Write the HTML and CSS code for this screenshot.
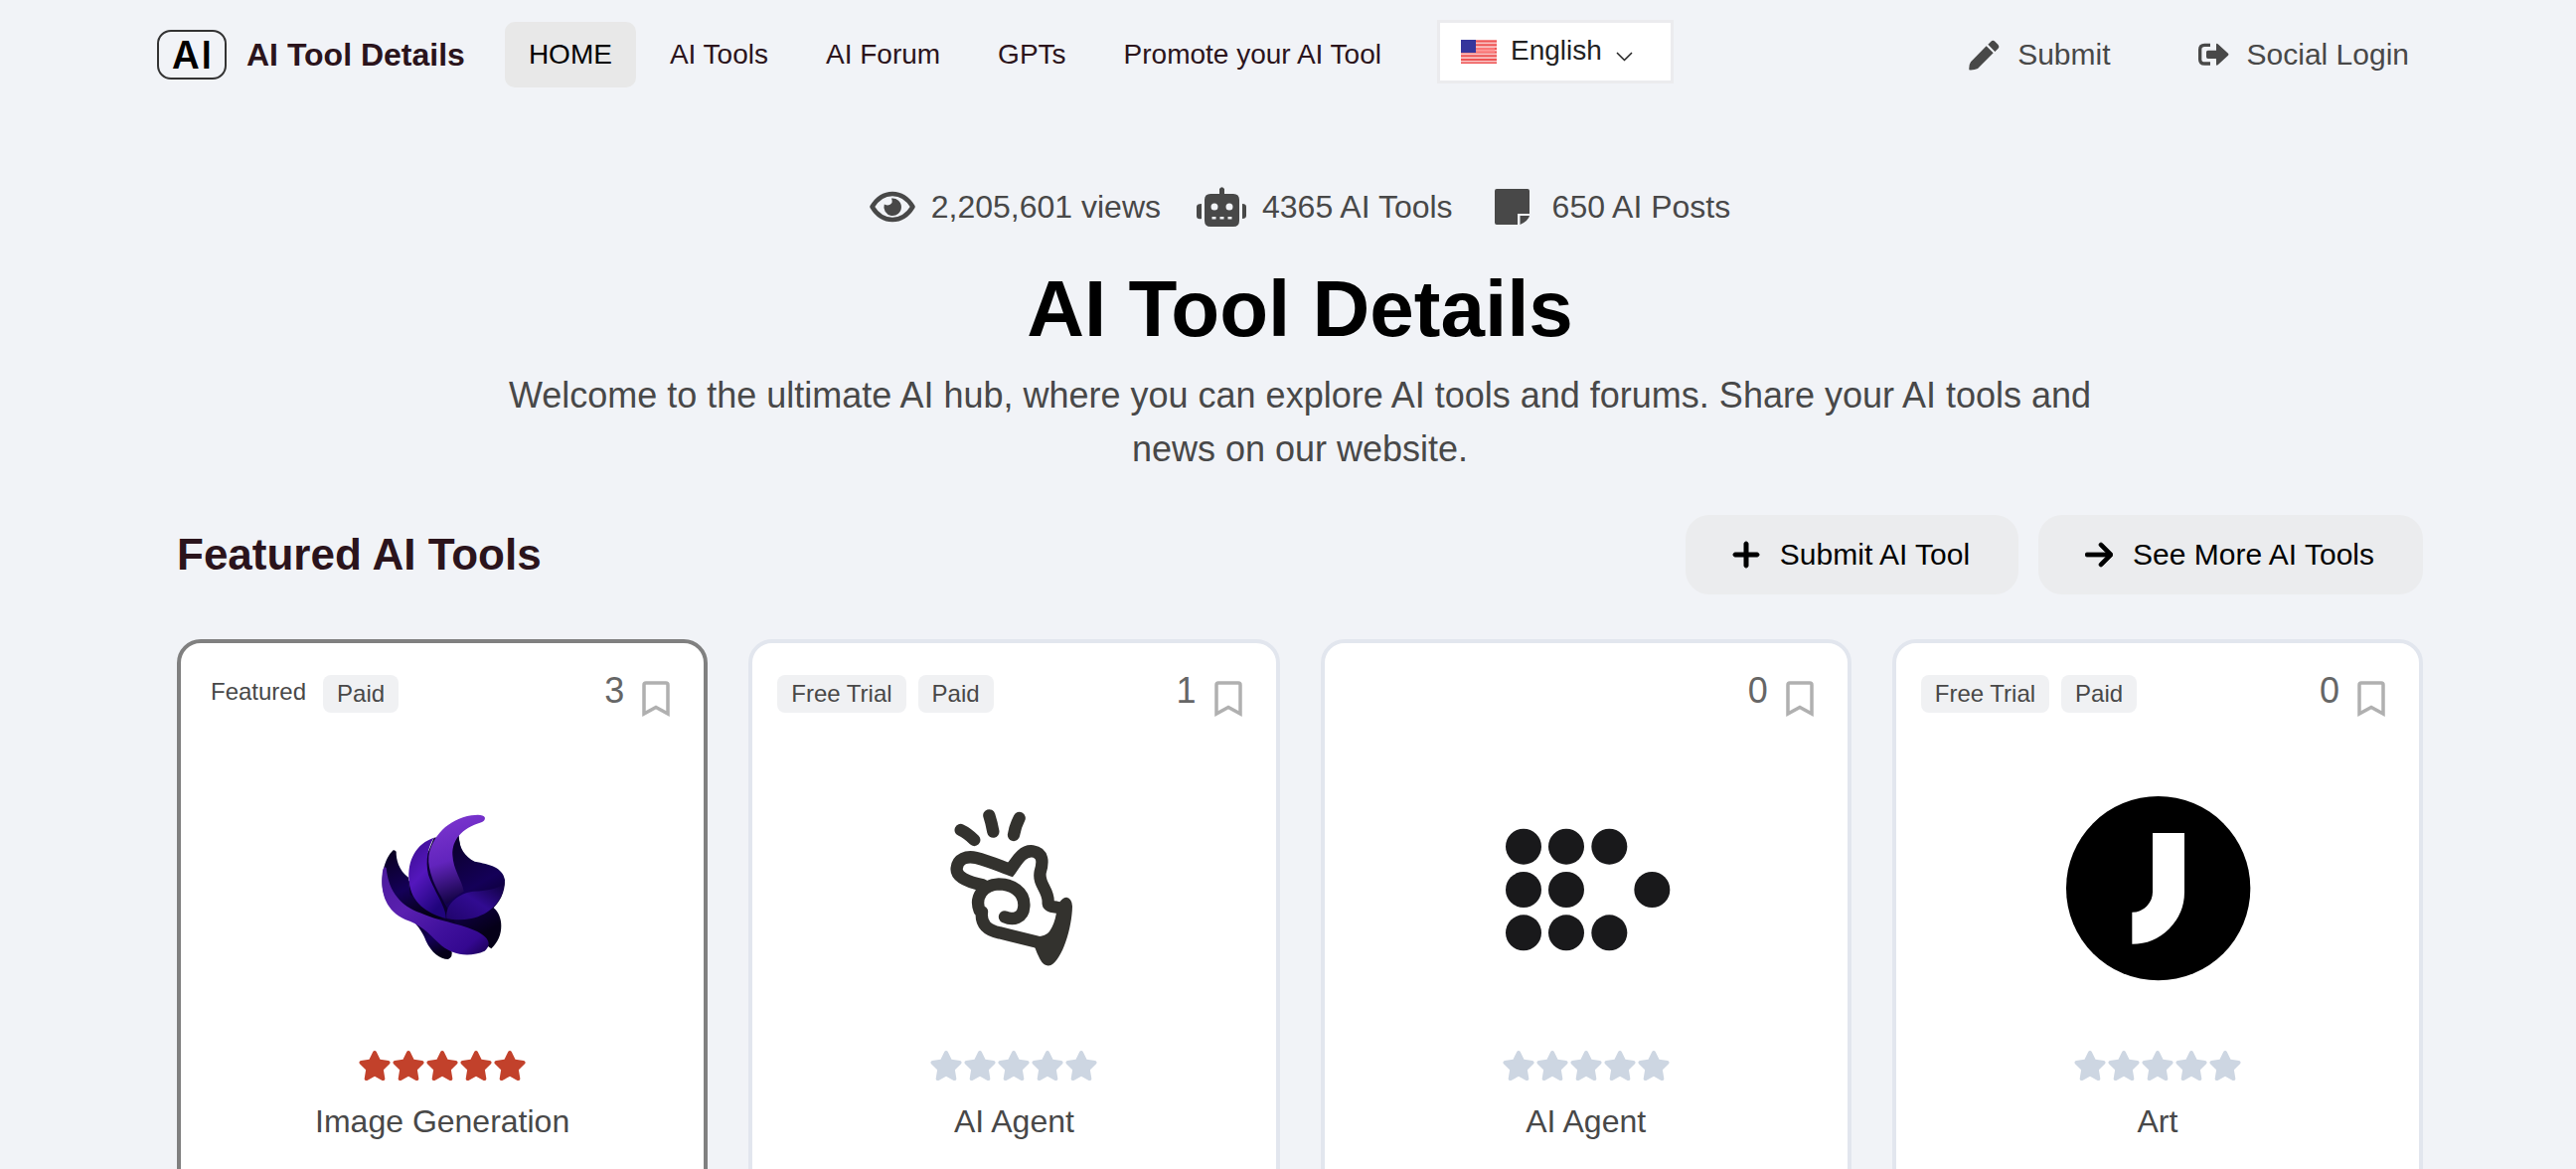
FILE: index.html
```html
<!DOCTYPE html>
<html lang="en">
<head>
<meta charset="utf-8">
<meta name="viewport" content="width=device-width, initial-scale=1">
<title>AI Tool Details</title>
<link rel="stylesheet" href="styles.css">
</head>
<body>
<svg class="sprite" aria-hidden="true">
  <symbol id="star" viewBox="0 0 576 512"><path d="M316.9 18C311.6 7 300.4 0 288.1 0s-23.4 7-28.8 18L195 150.3 51.4 171.5c-12 1.8-22 10.2-25.7 21.7s-.7 24.2 7.9 32.7L137.8 329 113.2 474.7c-2 12 3 24.2 12.9 31.3s23 8 33.8 2.3l128.3-68.5 128.3 68.5c10.8 5.7 23.9 4.9 33.8-2.3s14.9-19.3 12.9-31.3L438.5 329 542.7 225.9c8.6-8.5 11.7-21.2 7.9-32.7s-13.7-19.9-25.7-21.7L381.2 150.3 316.9 18z"/></symbol>
  <symbol id="bookmark" viewBox="0 0 28 36"><path d="M2 33V4q0-2 2-2H24q2 0 2 2V33L14 26.500z" fill="none" stroke="#b0b0b0" stroke-width="3.500"/></symbol>
</svg>

<header class="header">
  <a class="brand" href="#"><span class="brand-mark"><span>A</span><span>I</span></span><span class="brand-name">AI Tool Details</span></a>
  <nav class="nav">
    <a class="nav-link active" href="#">HOME</a>
    <a class="nav-link" href="#">AI Tools</a>
    <a class="nav-link" href="#">AI Forum</a>
    <a class="nav-link" href="#">GPTs</a>
    <a class="nav-link" href="#">Promote your AI Tool</a>
  </nav>
  <label class="language">
    <svg width="36" height="24" viewBox="0 0 36 24" aria-hidden="true">
      <rect width="36" height="24" fill="#f9c4c4"/>
      <path d="M0 1.500H36M0 5.200H36M0 8.900H36M0 12.600H36M0 16.300H36M0 20H36M0 23.500H36" stroke="#ee5555" stroke-width="2"/>
      <path d="M14 8H34V13H14z" fill="#f88" opacity=".7"/>
      <rect width="15" height="13" fill="#36369c"/>
    </svg>
    <select aria-label="Language"><option>English</option></select>
    <svg class="chevron" width="17" height="10" viewBox="0 0 17 10" aria-hidden="true"><path d="M1 1L8.500 8.500L16 1" fill="none" stroke="#222" stroke-width="1.500"/></svg>
  </label>
  <div class="account">
    <a class="account-link" href="#">
      <svg width="31" height="31" viewBox="0 0 93 93" aria-hidden="true"><path d="M1 91Q0 75 6 67L53 19L74 40L27 87Q16 92 1 91zM58 14L67 5Q73 0 79 5L88 14Q94 21 88 27L79 36z"/></svg>Submit</a>
    <a class="account-link" href="#">
      <svg width="31" height="24" viewBox="0 0 93 72" aria-hidden="true"><path d="M36 7H19Q5 7 5 20V50Q5 63 19 63H36" fill="none" stroke="#484848" stroke-width="10"/><path d="M29 23H54V6Q54 0 59 4L90 32Q93 35 90 38L59 67Q54 70 54 65V48H29Q24 48 24 43V28Q24 23 29 23z"/></svg>Social Login</a>
  </div>
</header>

<main class="main">
  <section class="hero">
    <ul class="stats">
      <li>
        <svg width="46" height="32" viewBox="0 0 46 32" aria-hidden="true"><path d="M2.500 16C8 7 15 3 23 3S38 7 43.500 16C38 25 31 29 23 29S8 25 2.500 16z" fill="none" stroke="#484848" stroke-width="4.500" stroke-linejoin="round"/><path d="M22 7.500A8.800 8.800 0 1 1 14.800 13.500Q20 16 22.500 12Q23 10 22 7.500z"/></svg>2,205,601 views</li>
      <li>
        <svg width="50" height="40" viewBox="0 0 50 40" aria-hidden="true"><path fill-rule="evenodd" d="M23 7V2Q25.500-1.500 28 2V7H37Q43 7 43 13V34Q43 40 37 40H14Q8 40 8 34V13Q8 7 14 7zM14.500 20a3.500 3.500 0 1 0 7 0a3.500 3.500 0 1 0-7 0zM29.500 20a3.500 3.500 0 1 0 7 0a3.500 3.500 0 1 0-7 0zM15.500 30V32.500H19.500V30zM23.500 30V32.500H27.500V30zM31.500 30V32.500H35.500V30z"/><path d="M5 17V32Q0 33 0 29V20Q0 17 5 17zM46 17V32Q50 32 50 29V20Q50 17 46 17z"/></svg>4365 AI Tools</li>
      <li>
        <svg width="48" height="36" viewBox="-6 0 48 36" aria-hidden="true"><path d="M2 0H33Q35 0 35 2V25H23V36H2Q0 36 0 34V2Q0 0 2 0zM25.500 27H35Q34 32 25.500 36z"/></svg>650 AI Posts</li>
    </ul>
    <h1>AI Tool Details</h1>
    <p>Welcome to the ultimate AI hub, where you can explore AI tools and forums. Share your AI tools and news on our website.</p>
  </section>

  <section>
    <div class="section-head">
      <h2>Featured AI Tools</h2>
      <div class="actions">
        <button class="action" type="button"><svg width="28" height="32" viewBox="0 0 448 512" aria-hidden="true"><path stroke="#000" stroke-width="16" d="M256 80c0-17.700-14.300-32-32-32s-32 14.300-32 32V224H48c-17.700 0-32 14.300-32 32s14.300 32 32 32H192V432c0 17.700 14.300 32 32 32s32-14.300 32-32V288H400c17.700 0 32-14.300 32-32s-14.300-32-32-32H256V80z"/></svg>Submit AI Tool</button>
        <button class="action" type="button"><svg width="28" height="32" viewBox="0 0 448 512" aria-hidden="true"><path stroke="#000" stroke-width="12" d="M438.600 278.600c12.500-12.500 12.500-32.800 0-45.300l-160-160c-12.500-12.500-32.800-12.500-45.300 0s-12.500 32.800 0 45.300L338.800 224 32 224c-17.700 0-32 14.300-32 32s14.300 32 32 32l306.700 0L233.400 393.400c-12.500 12.500-12.500 32.800 0 45.300s32.800 12.500 45.300 0l160-160z"/></svg>See More AI Tools</button>
      </div>
    </div>

    <div class="cards">
      <article class="card featured">
        <div class="card-top">
          <span class="label">Featured</span><span class="tag">Paid</span>
          <button class="save" type="button" aria-label="Bookmark, 3 saved">3<svg width="28" height="36"><use href="#bookmark"/></svg></button>
        </div>
        <svg class="logo" viewBox="-43 9 600 600" role="img" aria-label="Flame petals logo">
          <defs>
            <linearGradient id="horn" x1=".3" y1="0" x2=".5" y2="1"><stop offset="0" stop-color="#7c36cf"/><stop offset=".5" stop-color="#6224bd"/><stop offset="1" stop-color="#0b0038"/></linearGradient>
            <linearGradient id="petal" x1="0" y1="0" x2=".5" y2="1"><stop offset="0" stop-color="#380c8a"/><stop offset=".5" stop-color="#5417bd"/><stop offset="1" stop-color="#20047c"/></linearGradient>
            <linearGradient id="sweep" x1="0" y1="0" x2="1" y2="1"><stop offset="0" stop-color="#4b1b9c"/><stop offset=".35" stop-color="#5a20b0"/><stop offset=".65" stop-color="#3f109c"/><stop offset=".85" stop-color="#340890"/><stop offset="1" stop-color="#180050"/></linearGradient>
            <linearGradient id="right" x1="0" y1="1" x2="1" y2="0"><stop offset="0" stop-color="#20046c"/><stop offset=".5" stop-color="#310b91"/><stop offset="1" stop-color="#0c0038"/></linearGradient>
            <linearGradient id="night" x1="0" y1="0" x2=".4" y2="1"><stop offset="0" stop-color="#08001c"/><stop offset=".6" stop-color="#140058"/><stop offset="1" stop-color="#050018"/></linearGradient>
          </defs>
          <path d="M232 158L306 150L330 300L412 370L385 470L250 430L160 380L155 290L215 200z" fill="#0b0030"/>
          <path d="M109 196C82 220 68 280 80 325C95 375 140 400 170 412L270 400L160 330L155 278C125 255 118 225 118 200Q114 194 109 196z" fill="url(#night)"/>
          <path d="M306 150C308 190 325 215 355 230C400 238 440 248 446 285C447 325 430 350 412 370C440 390 448 455 405 493L300 420L210 260z" fill="url(#night)"/>
          <path d="M160 400C190 430 200 450 208 470C225 505 250 525 275 525Q290 518 285 498L250 430z" fill="url(#night)"/>
          <path d="M232 158C180 175 150 225 157 290C163 355 210 385 268 402C270 370 235 325 215 270C205 225 215 185 232 158z" fill="url(#petal)"/>
          <path d="M386 98C382 88 365 88 345 91C275 102 225 155 216 215C212 255 235 310 270 360C285 345 305 330 322 320C318 290 290 255 288 210C287 165 315 130 375 112Q386 107 386 98z" fill="url(#horn)"/>
          <path d="M270 402C265 355 310 325 350 320C400 318 435 310 445 290C442 350 400 390 345 402Q305 410 270 402z" fill="url(#right)"/>
          <path d="M76 270C70 330 90 380 145 405C190 420 215 445 245 475C285 515 340 520 385 500C410 480 395 455 355 438C300 415 245 410 190 385C135 365 95 325 88 250C80 240 77 255 76 270z" fill="url(#sweep)"/>
        </svg>
        <div class="stars rated" role="img" aria-label="5 of 5 stars"><svg><use href="#star"/></svg><svg><use href="#star"/></svg><svg><use href="#star"/></svg><svg><use href="#star"/></svg><svg><use href="#star"/></svg></div>
        <div class="category">Image Generation</div>
      </article>

      <article class="card">
        <div class="card-top">
          <span class="tag">Free Trial</span><span class="tag">Paid</span>
          <button class="save" type="button" aria-label="Bookmark, 1 saved">1<svg width="28" height="36"><use href="#bookmark"/></svg></button>
        </div>
        <svg class="logo" viewBox="-27 9 600 600" role="img" aria-label="Snapping fingers logo">
          <g fill="none" stroke="#33322e" stroke-width="37" stroke-linecap="round" stroke-linejoin="round">
            <path d="M113 135Q133 144 154 165M199 91Q206 112 211 140M290 99Q278 122 273 150"/>
            <path d="M180 301C135 292 98 277 101 250C104 222 130 212 160 219C195 227 230 243 263 255C280 232 298 195 330 199C363 204 362 232 353 262C346 300 380 315 377 355Q377 366 402 368" stroke-linejoin="miter"/>
            <path d="M246 397C270 408 302 402 304 365C307 320 265 298 228 298C178 300 155 340 170 378L177 382C172 420 195 438 230 445L345 473"/>
          </g>
          <path d="M412 352Q421 338 433 338Q449 342 450 365C449 430 420 525 385 543Q365 549 352 524Q344 510 337 490L343 457Q370 456 381 441Q396 420 402 385L385 374L395 352z" fill="#33322e"/>
        </svg>
        <div class="stars" role="img" aria-label="Not rated"><svg><use href="#star"/></svg><svg><use href="#star"/></svg><svg><use href="#star"/></svg><svg><use href="#star"/></svg><svg><use href="#star"/></svg></div>
        <div class="category">AI Agent</div>
      </article>

      <article class="card">
        <div class="card-top">
          <button class="save" type="button" aria-label="Bookmark, 0 saved">0<svg width="28" height="36"><use href="#bookmark"/></svg></button>
        </div>
        <svg class="logo" viewBox="46 9 600 600" role="img" aria-label="Dotted arrow logo">
          <g fill="#19191b">
            <circle cx="157" cy="185" r="54"/><circle cx="286" cy="185" r="54"/><circle cx="416" cy="185" r="54"/>
            <circle cx="157" cy="315" r="54"/><circle cx="286" cy="315" r="54"/><circle cx="545" cy="315" r="54"/>
            <circle cx="157" cy="445" r="54"/><circle cx="286" cy="445" r="54"/><circle cx="416" cy="445" r="54"/>
          </g>
        </svg>
        <div class="stars" role="img" aria-label="Not rated"><svg><use href="#star"/></svg><svg><use href="#star"/></svg><svg><use href="#star"/></svg><svg><use href="#star"/></svg><svg><use href="#star"/></svg></div>
        <div class="category">AI Agent</div>
      </article>

      <article class="card">
        <div class="card-top">
          <span class="tag">Free Trial</span><span class="tag">Paid</span>
          <button class="save" type="button" aria-label="Bookmark, 0 saved">0<svg width="28" height="36"><use href="#bookmark"/></svg></button>
        </div>
        <svg class="logo" viewBox="31 39 600 600" role="img" aria-label="Hook in a circle logo">
          <circle cx="333" cy="341" r="278"/>
          <path d="M364 174V352A110 109 0 0 1 254 461" fill="none" stroke="#fff" stroke-width="96"/>
        </svg>
        <div class="stars" role="img" aria-label="Not rated"><svg><use href="#star"/></svg><svg><use href="#star"/></svg><svg><use href="#star"/></svg><svg><use href="#star"/></svg><svg><use href="#star"/></svg></div>
        <div class="category">Art</div>
      </article>
    </div>
  </section>
</main>
</body>
</html>
```
FILE: styles.css
```css
* { box-sizing: border-box; }

body {
  margin: 0;
  height: 100vh;
  overflow: hidden;
  background: #f1f3f7;
  color: #484848;
  font-family: "Liberation Sans", Arial, Helvetica, sans-serif;
}

a { color: inherit; text-decoration: none; }
button, select { font: inherit; color: inherit; border: 0; background: none; padding: 0; }
h1, h2, p, ul { margin: 0; padding: 0; }
svg { display: block; flex: none; fill: currentColor; }
.sprite { display: none; }

.header {
  display: flex;
  align-items: center;
  min-height: 110px;
  padding: 20px 168px 20px 158px;
  white-space: nowrap;
}

.brand { display: flex; align-items: center; gap: 20px; color: #2b141c; }
.brand-mark {
  display: flex;
  justify-content: center;
  gap: 2px;
  width: 70px;
  height: 50px;
  border: 2px solid #333;
  border-radius: 14px;
  color: #000;
  font: 600 38px/46px Inter, sans-serif;
}
.brand-name { font-size: 32px; font-weight: 700; }

.nav { display: flex; gap: 10px; margin-left: 40px; }
.nav-link {
  padding: 0 24px;
  border-radius: 10px;
  color: #2b141c;
  font-size: 28px;
  line-height: 66px;
}
.nav-link.active { background: #e8e8e8; color: #000; }

.language {
  display: flex;
  align-items: center;
  align-self: flex-start;
  gap: 14px;
  height: 64px;
  margin-left: 32px;
  padding: 0 38px 0 21px;
  border: 3px solid #ebebee;
  background: #fff;
  color: #222;
  font-size: 28px;
}
.language select { appearance: none; width: 92px; padding-bottom: 4px; }
.chevron { margin-top: 10px; }

.account { display: flex; gap: 88px; margin-left: auto; font-size: 30px; }
.account-link { display: flex; align-items: center; gap: 18px; }

.main { padding: 74px 154px 0 178px; }

.hero { text-align: center; }
.stats {
  display: flex;
  justify-content: center;
  gap: 36px;
  list-style: none;
  font-size: 32px;
  line-height: 48px;
}
.stats li { display: flex; align-items: center; gap: 16px; }
h1 { margin-top: 31px; color: #000; font-size: 80px; line-height: 96px; }
.hero p { max-width: 1640px; margin: 12px auto 0; font-size: 36px; line-height: 54px; }

.section-head {
  display: flex;
  align-items: center;
  justify-content: space-between;
  margin: 39px 0 45px;
}
h2 { color: #2b141c; font-size: 44px; line-height: 56px; }
.actions { display: flex; gap: 20px; }
.action {
  display: flex;
  align-items: center;
  gap: 20px;
  height: 80px;
  padding: 0 49px 0 47px;
  border-radius: 24px;
  background: #ebecee;
  color: #000;
  font-size: 30px;
}

.cards { display: grid; grid-template-columns: repeat(4, 1fr); gap: 41px; }
.card {
  display: flex;
  flex-direction: column;
  align-items: center;
  padding: 32px 34px 120px 25px;
  border: 4px solid #e2e6ee;
  border-radius: 24px;
  background: #fff;
}
.card.featured { border-color: #808080; }

.card-top { display: flex; align-items: flex-start; align-self: stretch; gap: 12px; height: 46px; }
.label { padding: 0 5px; font-size: 24px; line-height: 34px; }
.tag {
  padding: 0 14px;
  border-radius: 8px;
  background: #f0f1f3;
  font-size: 24px;
  line-height: 38px;
}
.save {
  display: flex;
  align-items: flex-start;
  gap: 18px;
  margin-left: auto;
  color: #666;
  font-size: 36px;
  line-height: 32px;
}
.save svg { margin-top: 6px; }

.logo { width: 200px; height: 200px; margin: 68px 0 63px 9px; color: #000; }
.stars { display: flex; margin-left: 9px; color: #cdd6e2; }
.stars svg { width: 34px; height: 32px; }
.stars.rated { color: #c2412b; }
.category { margin: 16px 0 0 9px; font-size: 32px; line-height: 48px; }
```
